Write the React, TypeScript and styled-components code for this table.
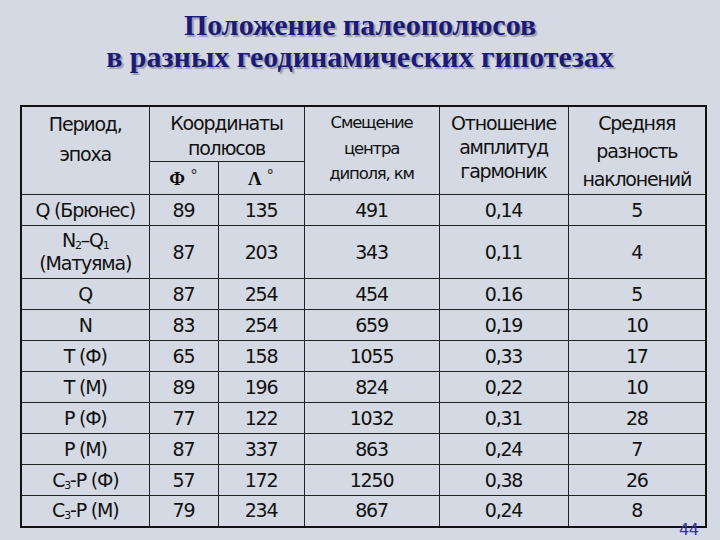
import React from 'react';
import styled, { createGlobalStyle } from 'styled-components';

const GlobalStyle = createGlobalStyle`
  html, body {
    margin: 0;
    padding: 0;
    background: #d5d9e3;
  }
  body {
    font-family: 'DejaVu Sans', 'Liberation Sans', sans-serif;
    color: #111;
  }
`;

// одна строка в двухстрочной ячейке периода
const Line = styled.span`
  display: block;
  line-height: 23px;
`;

type Row = {
  period: React.ReactNode;
  phi: string;
  lambda: string;
  shift: string;
  ratio: string;
  tilt: string;
  tall?: boolean;
};

const rows: Row[] = [
  { period: 'Q (Брюнес)', phi: '89', lambda: '135', shift: '491', ratio: '0,14', tilt: '5' },
  {
    period: (
      <>
        <Line>
          N<sub>2</sub>–Q<sub>1</sub>
        </Line>
        <Line>(Матуяма)</Line>
      </>
    ),
    phi: '87',
    lambda: '203',
    shift: '343',
    ratio: '0,11',
    tilt: '4',
    tall: true,
  },
  { period: 'Q', phi: '87', lambda: '254', shift: '454', ratio: '0.16', tilt: '5' },
  { period: 'N', phi: '83', lambda: '254', shift: '659', ratio: '0,19', tilt: '10' },
  { period: 'T (Ф)', phi: '65', lambda: '158', shift: '1055', ratio: '0,33', tilt: '17' },
  { period: 'T (M)', phi: '89', lambda: '196', shift: '824', ratio: '0,22', tilt: '10' },
  { period: 'P (Ф)', phi: '77', lambda: '122', shift: '1032', ratio: '0,31', tilt: '28' },
  { period: 'P (M)', phi: '87', lambda: '337', shift: '863', ratio: '0,24', tilt: '7' },
  {
    period: (
      <>
        C<sub>3</sub>-P (Ф)
      </>
    ),
    phi: '57',
    lambda: '172',
    shift: '1250',
    ratio: '0,38',
    tilt: '26',
  },
  {
    period: (
      <>
        C<sub>3</sub>-P (M)
      </>
    ),
    phi: '79',
    lambda: '234',
    shift: '867',
    ratio: '0,24',
    tilt: '8',
  },
];

const App = () => {
  return (
    <>
      <GlobalStyle />
      <Slide>
        <Title>
          Положение палеополюсов
          <br />
          в разных геодинамических гипотезах
        </Title>
        <Table>
          <colgroup>
            <col style={{ width: 128 }} />
            <col style={{ width: 69 }} />
            <col style={{ width: 86 }} />
            <col style={{ width: 135 }} />
            <col style={{ width: 129 }} />
            <col style={{ width: 138 }} />
          </colgroup>
          <thead>
            <tr>
              <HeadCell rowSpan={2} $lh={30} $pad={2}>
                Период,
                <br />
                эпоха
              </HeadCell>
              <HeadCell colSpan={2} $lh={25} $pad={4} $h={54}>
                Координаты
                <br />
                полюсов
              </HeadCell>
              <HeadCell rowSpan={2} $lh={25.5} $pad={3} $small>
                Смещение
                <br />
                центра
                <br />
                диполя, км
              </HeadCell>
              <HeadCell rowSpan={2} $lh={24} $pad={4}>
                Отношение
                <br />
                амплитуд
                <br />
                гармоник
              </HeadCell>
              <HeadCell rowSpan={2} $lh={28} $pad={2}>
                Средняя
                <br />
                разность
                <br />
                наклонений
              </HeadCell>
            </tr>
            <tr>
              <AngleCell>
                <Greek>Φ</Greek>
                <Degree>°</Degree>
              </AngleCell>
              <AngleCell>
                <Greek>Λ</Greek>
                <Degree>°</Degree>
              </AngleCell>
            </tr>
          </thead>
          <tbody>
            {rows.map((r, i) => (
              <BodyRow key={i} $tall={r.tall}>
                <Cell>{r.period}</Cell>
                <Cell>{r.phi}</Cell>
                <Cell>{r.lambda}</Cell>
                <Cell>{r.shift}</Cell>
                <Cell>{r.ratio}</Cell>
                <Cell>{r.tilt}</Cell>
              </BodyRow>
            ))}
          </tbody>
        </Table>
        <PageNumber>44</PageNumber>
      </Slide>
    </>
  );
};

export default App;

const Slide = styled.div`
  position: relative;
  width: 720px;
  height: 540px;
  overflow: hidden;
  display: flex;
  flex-direction: column;
  align-items: flex-start;
`;

const Title = styled.h1`
  margin: 0;
  width: 720px;
  height: 105px;
  padding-top: 9px;
  box-sizing: border-box;
  text-align: center;
  font-family: 'Liberation Serif', 'Times New Roman', serif;
  font-weight: bold;
  font-size: 30px;
  line-height: 32px;
  color: #1a1a78;
  text-shadow: 2px 2px 1px #9a9eb0;
`;

const Table = styled.table`
  margin-left: 20px;
  table-layout: fixed;
  border-collapse: collapse;
  border: 2px solid #111;
  width: 685px;
`;

const HeadCell = styled.th<{ $lh: number; $pad: number; $small?: boolean; $h?: number }>`
  font-weight: normal;
  vertical-align: top;
  text-align: center;
  border: 1px solid #222;
  padding: ${(p) => p.$pad}px 0 0;
  font-size: ${(p) => (p.$small ? '16.5px' : '19px')};
  line-height: ${(p) => p.$lh}px;
  height: ${(p) => (p.$h ? `${p.$h}px` : 'auto')};
  box-sizing: border-box;
  letter-spacing: -1.2px;
  white-space: nowrap;
`;

const AngleCell = styled.th`
  font-weight: normal;
  text-align: center;
  border: 1px solid #222;
  height: 33px;
  padding: 0;
  box-sizing: border-box;
  font-size: 17px;
`;

const Greek = styled.span`
  font-family: 'Liberation Serif', 'Times New Roman', serif;
  font-weight: bold;
  font-size: 19px;
`;

const Degree = styled.span`
  font-size: 15px;
  margin-left: 5px;
  vertical-align: 4px;
  color: #333;
`;

const BodyRow = styled.tr<{ $tall?: boolean }>`
  height: ${(p) => (p.$tall ? 53 : 31)}px;
`;

const Cell = styled.td`
  border: 1px solid #222;
  text-align: center;
  padding: 0;
  font-size: 19px;
  line-height: 23px;
  letter-spacing: -1.2px;
  white-space: nowrap;

  sub {
    font-size: 11px;
    line-height: 0;
    vertical-align: -2px;
  }
`;

const PageNumber = styled.div`
  position: absolute;
  left: 679px;
  top: 520px;
  font-family: 'DejaVu Sans', sans-serif;
  font-size: 16px;
  color: #3434a8;
  letter-spacing: -0.5px;
`;
